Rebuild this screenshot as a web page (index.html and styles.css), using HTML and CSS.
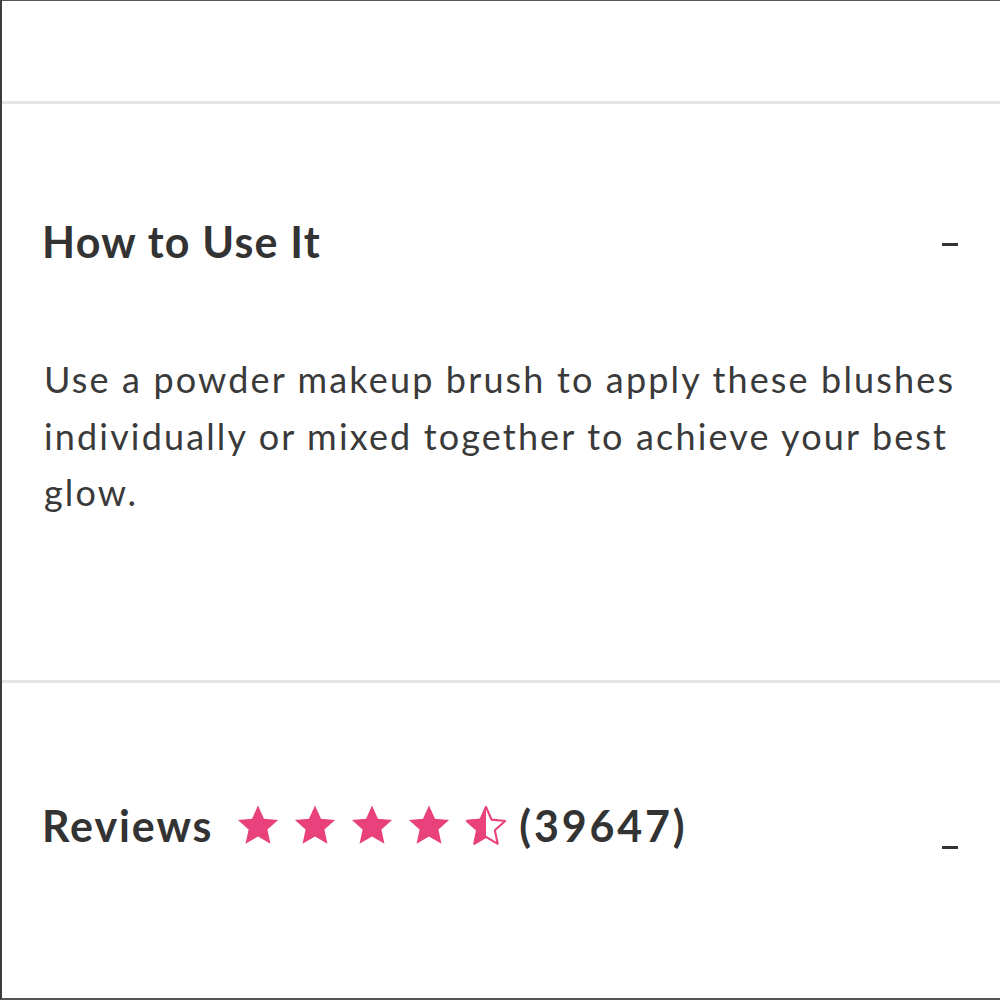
FILE: index.html
```html
<!DOCTYPE html>
<html>
<head>
<meta charset="utf-8">
<link rel="stylesheet" href="styles.css">
</head>
<body>
<div class="frame">
  <div class="top-space"></div>
  <section class="panel panel-use">
    <div class="panel-head">
      <h2 class="panel-title">How to Use It</h2>
      <span class="toggle"></span>
    </div>
    <p class="panel-text">Use a powder makeup brush to apply these blushes individually or mixed together to achieve your best glow.</p>
  </section>
  <section class="panel panel-reviews">
    <div class="panel-head reviews-head">
      <div class="reviews-title">
        <h2 class="panel-title title-reviews">Reviews</h2>
        <div class="stars">
          <svg class="star" viewBox="0 0 24 24"><path d="M12 1.8l3.1 6.9 7.4.7-5.6 5 1.6 7.4L12 18l-6.5 3.8 1.6-7.4-5.6-5 7.4-.7z" fill="#e8417b"/></svg>
          <svg class="star" viewBox="0 0 24 24"><path d="M12 1.8l3.1 6.9 7.4.7-5.6 5 1.6 7.4L12 18l-6.5 3.8 1.6-7.4-5.6-5 7.4-.7z" fill="#e8417b"/></svg>
          <svg class="star" viewBox="0 0 24 24"><path d="M12 1.8l3.1 6.9 7.4.7-5.6 5 1.6 7.4L12 18l-6.5 3.8 1.6-7.4-5.6-5 7.4-.7z" fill="#e8417b"/></svg>
          <svg class="star" viewBox="0 0 24 24"><path d="M12 1.8l3.1 6.9 7.4.7-5.6 5 1.6 7.4L12 18l-6.5 3.8 1.6-7.4-5.6-5 7.4-.7z" fill="#e8417b"/></svg>
          <svg class="star" viewBox="0 0 24 24"><path d="M12 2.6l2.9 6.6 7.1.7-5.4 4.8 1.5 7.1L12 18.2l-6.1 3.6 1.5-7.1L2 9.9l7.1-.7z" fill="none" stroke="#e8417b" stroke-width="1.1" stroke-linejoin="round"/><path d="M12 1.8V18l-6.5 3.8 1.6-7.4-5.6-5 7.4-.7z" fill="#e8417b"/></svg>
        </div>
        <span class="count">(39647)</span>
      </div>
      <span class="toggle toggle-low"></span>
    </div>
  </section>
</div>
</body>
</html>
```
FILE: styles.css
```css
html, body {
  margin: 0;
  padding: 0;
  background: #fff;
}
.frame {
  width: 1000px;
  height: 1000px;
  box-sizing: border-box;
  border-top: 1px solid #555;
  border-left: 2px solid #3c3c3c;
  border-bottom: 2px solid #555;
  display: flex;
  flex-direction: column;
  font-family: "Lato", "Noto Sans", sans-serif;
  color: #333;
}
.top-space {
  height: 100px;
  flex: none;
}
.panel {
  border-top: 3px solid #e5e5e5;
  padding: 0 42px 0 40px;
}
.panel-use {
  height: 576px;
  flex: none;
}
.panel-head {
  display: flex;
  align-items: center;
  justify-content: space-between;
  margin-top: 112px;
  height: 50px;
}
.panel-title {
  margin: 0;
  font-size: 43px;
  font-weight: 700;
  color: #333;
  letter-spacing: 1.2px;
}
.title-reviews {
  letter-spacing: 1.9px;
}
.toggle {
  display: block;
  width: 16px;
  height: 3px;
  background: #333;
  margin-top: 6px;
}
.panel-text {
  margin: 85px 0 0 2px;
  width: 930px;
  font-size: 36px;
  line-height: 56.5px;
  color: #3a3a3a;
  font-weight: 400;
  letter-spacing: 2.15px;
}
.reviews-head {
  margin-top: 117px;
}
.reviews-title {
  display: flex;
  align-items: center;
}
.stars {
  display: flex;
  gap: 11px;
  margin-left: 22px;
  margin-right: 10px;
}
.star {
  width: 46px;
  height: 46px;
  display: block;
}
.count {
  font-size: 43px;
  font-weight: 700;
  color: #333;
  letter-spacing: 2.8px;
}
.toggle-low {
  margin-top: 44px;
}
```
